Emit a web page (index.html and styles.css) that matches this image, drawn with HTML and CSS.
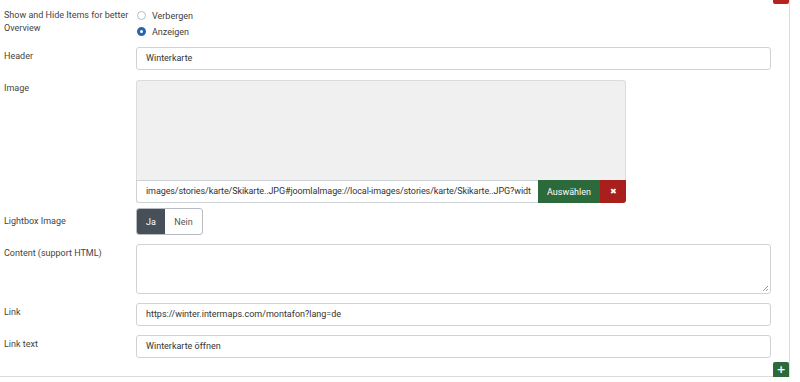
FILE: index.html
```html
<!DOCTYPE html>
<html lang="de">
<head>
    <meta charset="UTF-8">
    <title>Subform</title>
    <link rel="stylesheet" href="styles.css">
</head>
<body>
    <div class="subform">
        <div class="remove-top"></div>

        <div class="row row-toggle">
            <label class="field-label">Show and Hide Items for better Overview</label>
            <div class="radios">
                <div class="radio"><span class="dot"></span>Verbergen</div>
                <div class="radio"><span class="dot checked"></span>Anzeigen</div>
            </div>
        </div>

        <div class="row row-header">
            <label class="field-label">Header</label>
            <div class="input">Winterkarte</div>
        </div>

        <div class="row row-image">
            <label class="field-label">Image</label>
            <div class="media">
                <div class="preview"></div>
                <div class="media-bar">
                    <div class="media-path">images/stories/karte/Skikarte..JPG#joomlaImage://local-images/stories/karte/Skikarte..JPG?widt</div>
                    <button class="btn-select">Auswählen</button>
                    <button class="btn-clear">&#x2716;</button>
                </div>
            </div>
        </div>

        <div class="row row-lightbox">
            <label class="field-label">Lightbox Image</label>
            <div class="switch">
                <span class="on">Ja</span>
                <span class="off">Nein</span>
            </div>
        </div>

        <div class="row row-content">
            <label class="field-label">Content (support HTML)</label>
            <div class="textarea"></div>
        </div>

        <div class="row row-link">
            <label class="field-label">Link</label>
            <div class="input">https://winter.intermaps.com/montafon?lang=de</div>
        </div>

        <div class="row row-linktext">
            <label class="field-label">Link text</label>
            <div class="input">Winterkarte öffnen</div>
        </div>

        <div class="add-row">
            <button class="btn-add">+</button>
        </div>
    </div>
</body>
</html>
```

FILE: styles.css
```css
body {
    margin: 0;
    background: #fff;
    font-family: Roboto, "Liberation Sans", sans-serif;
    font-size: 9px;
    color: #3d3d3d;
}
.subform {
    position: relative;
    width: 789px;
    height: 376px;
    border-right: 1px solid #dcdcdc;
    border-bottom: 1px solid #dcdcdc;
    box-sizing: content-box;
}
.remove-top {
    position: absolute;
    top: 0;
    right: 0;
    width: 16px;
    height: 4px;
    background: #b5231e;
    border-radius: 0 0 2px 2px;
}
.row {
    display: flex;
    align-items: flex-start;
}
.field-label {
    width: 132px;
    padding-left: 4px;
    line-height: 13px;
    color: #444;
    flex-shrink: 0;
}
.row-toggle {
    padding-top: 9px;
    height: 38px;
    box-sizing: border-box;
}
.row-toggle .field-label {
    padding-top: 0;
    width: 128px;
    padding-right: 4px;
}
.radios {
    display: flex;
    flex-direction: column;
    gap: 3px;
}
.radio {
    display: flex;
    align-items: center;
    height: 13px;
    margin-left: 1px;
}
.dot {
    width: 7px;
    height: 7px;
    border: 1px solid #b8bcc0;
    border-radius: 50%;
    margin-right: 6px;
    box-sizing: content-box;
}
.dot.checked {
    border: 3px solid #2a64ad;
    width: 3px;
    height: 3px;
    background: #fff;
}
.input {
    flex: 1;
    margin-right: 18px;
    height: 23px;
    border: 1px solid #ced3d8;
    border-radius: 3px;
    box-sizing: border-box;
    padding: 0 9px;
    line-height: 21px;
    color: #333;
    white-space: nowrap;
    overflow: hidden;
}
.row-header {
    margin-top: 9px;
}
.row-header .field-label,
.row-link .field-label,
.row-linktext .field-label {
    padding-top: 3px;
}
.row-image {
    margin-top: 10px;
}
.row-image .field-label {
    padding-top: 2px;
}
.media {
    width: 490px;
}
.preview {
    height: 100px;
    background: #f0f0f0;
    border: 1px solid #dcdcdc;
    border-bottom: none;
    border-radius: 3px 3px 0 0;
    box-sizing: border-box;
}
.media-bar {
    display: flex;
    height: 23px;
}
.media-path {
    flex: 1;
    min-width: 0;
    border: 1px solid #ced3d8;
    border-right: none;
    border-radius: 0 0 0 3px;
    padding: 0 6px 0 9px;
    line-height: 21px;
    letter-spacing: -0.1px;
    white-space: nowrap;
    overflow: hidden;
    color: #333;
}
.btn-select {
    width: 62px;
    flex-shrink: 0;
    border: none;
    background: #2d6a3b;
    color: #fff;
    font-family: inherit;
    font-size: 9px;
    padding: 0;
}
.btn-clear {
    width: 26px;
    flex-shrink: 0;
    border: none;
    background: #a91f1b;
    color: #fff;
    font-size: 8px;
    padding: 0;
    border-radius: 0 0 3px 0;
}
.row-lightbox {
    margin-top: 5px;
}
.row-lightbox .field-label {
    padding-top: 7px;
}
.switch {
    display: flex;
    height: 27px;
    border: 1px solid #b8bcc0;
    border-radius: 3px;
    overflow: hidden;
    box-sizing: border-box;
}
.switch span {
    display: flex;
    align-items: center;
    justify-content: center;
}
.switch .on {
    width: 28px;
    background: #474f59;
    color: #fff;
}
.switch .off {
    width: 37px;
    color: #555;
}
.row-content {
    margin-top: 9px;
}
.row-content .field-label {
    padding-top: 3px;
}
.textarea {
    position: relative;
    flex: 1;
    margin-right: 18px;
    height: 50px;
    border: 1px solid #ced3d8;
    border-radius: 3px;
    box-sizing: border-box;
}
.textarea::after {
    content: "";
    position: absolute;
    right: 2px;
    bottom: 2px;
    width: 5px;
    height: 5px;
    background: linear-gradient(135deg, transparent 45%, #999 45%, #999 55%, transparent 55%, transparent 75%, #999 75%, #999 85%, transparent 85%);
}
.row-link,
.row-linktext {
    margin-top: 9px;
}
.add-row {
    display: flex;
    justify-content: flex-end;
    margin-top: 4px;
}
.btn-add {
    width: 16px;
    height: 15px;
    border: none;
    border-radius: 2px 2px 0 0;
    background: #2d6a3b;
    color: #fff;
    font-family: "DejaVu Sans", sans-serif;
    font-weight: bold;
    font-size: 11px;
    line-height: 15px;
    padding: 0;
}
```
